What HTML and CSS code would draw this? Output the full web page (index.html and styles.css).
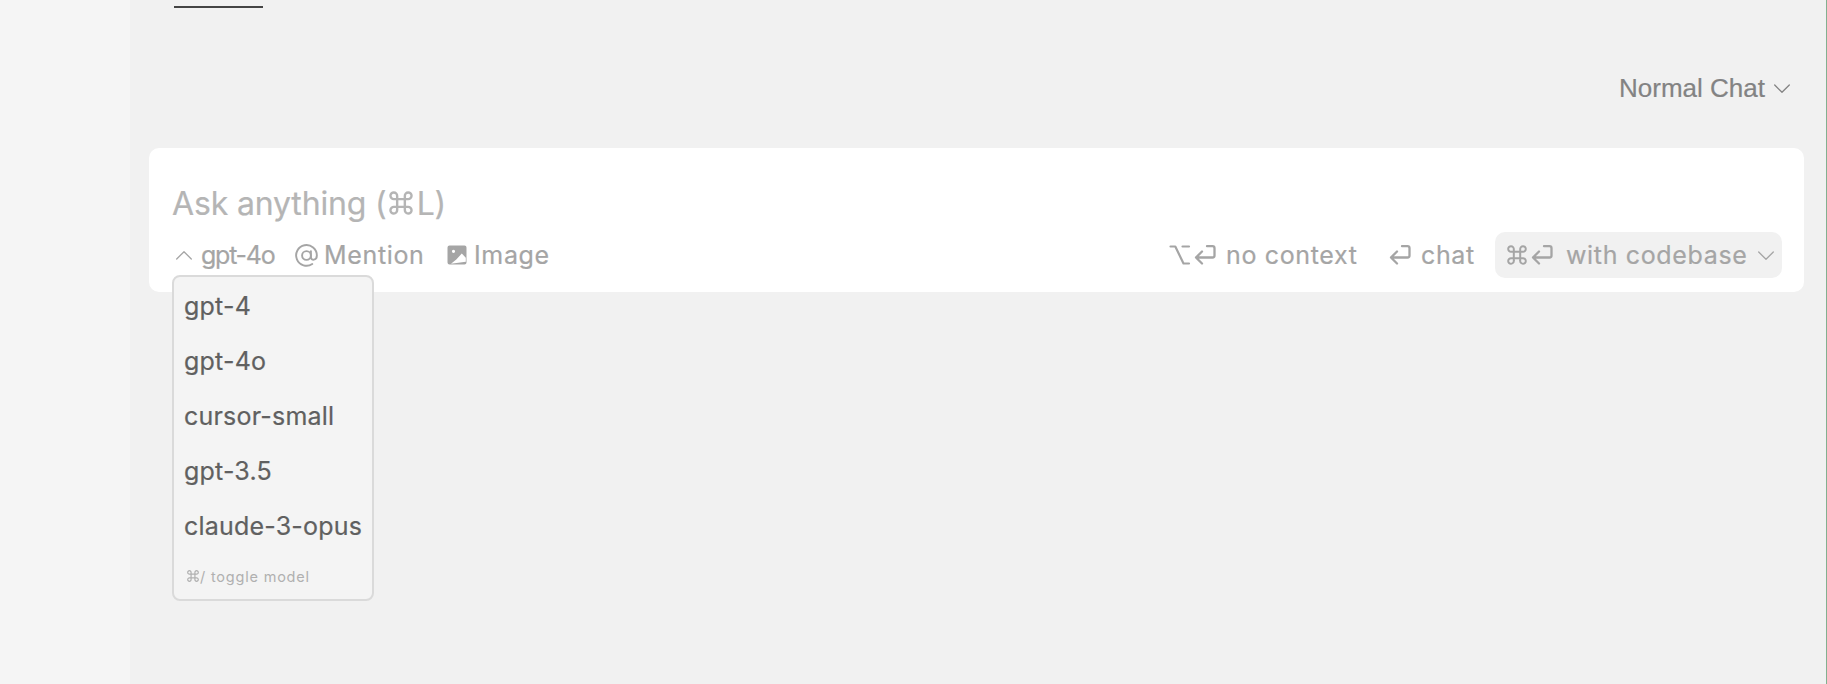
FILE: index.html
```html
<!DOCTYPE html>
<html lang="en">
<head>
    <meta charset="UTF-8" />
    <meta name="viewport" content="width=device-width, initial-scale=1.0"/>
    <title>Chat</title>
    <link rel="stylesheet" href="styles.css">
</head>
<body>

    <!-- Shared icons -->
    <svg class="icon-defs">
        <symbol id="icon-return" viewBox="0 0 22 20">
            <path d="M13 1.200h5.500a2 2 0 0 1 2 2v7.300a2 2 0 0 1-2 2H2M8 6.500L2 12.500l6 6" />
        </symbol>
        <symbol id="icon-command" viewBox="0 0 20 20">
            <path d="M6.8 6.8h6.4v6.4H6.8zM6.8 6.8H4.1a2.8 2.8 0 1 1 2.7-2.7zM13.2 6.8V4.1a2.8 2.8 0 1 1 2.7 2.7zM13.2 13.2h2.7a2.8 2.8 0 1 1-2.7 2.7zM6.8 13.2v2.7a2.8 2.8 0 1 1-2.7-2.7z" />
        </symbol>
        <symbol id="icon-chevron" viewBox="0 0 16 10">
            <path d="M0.7 1l7.3 7.3L15.3 1" />
        </symbol>
    </svg>

    <div class="app">
        <div class="sidebar"></div>

        <div class="chat-panel">
            <div class="tab-underline"></div>

            <!-- Chat mode -->
            <div class="chat-mode">
                <span class="mode-label">Normal Chat</span>
                <svg class="chevron"><use href="#icon-chevron" /></svg>
            </div>

            <!-- Input box -->
            <div class="input-box">
                <div class="placeholder">Ask anything (<svg class="command"><use href="#icon-command" /></svg>L)</div>

                <div class="toolbar">
                    <div class="model-picker">
                        <svg class="chevron chevron-up"><use href="#icon-chevron" /></svg>
                        <span class="model-name">gpt-4o</span>

                        <!-- Model dropdown -->
                        <div class="model-menu">
                            <div class="model-item">gpt-4</div>
                            <div class="model-item">gpt-4o</div>
                            <div class="model-item">cursor-small</div>
                            <div class="model-item">gpt-3.5</div>
                            <div class="model-item">claude-3-opus</div>
                            <div class="model-hint"><svg class="command"><use href="#icon-command" /></svg>/ toggle model</div>
                        </div>
                    </div>

                    <div class="mention">
                        <svg class="at-icon" viewBox="0 0 24 24">
                            <circle cx="12" cy="12" r="4.6" />
                            <path d="M16.6 7.4v6.2c0 4 6.2 3.8 6.2-1.6A10.8 10.8 0 1 0 18 20.9" />
                        </svg>
                        <span class="mention-label">Mention</span>
                    </div>

                    <div class="image">
                        <svg class="image-icon" viewBox="0 0 20 20">
                            <path fill-rule="evenodd" d="M2.500 .5h15a2 2 0 0 1 2 2v15a2 2 0 0 1-2 2h-15a2 2 0 0 1-2-2v-15a2 2 0 0 1 2-2zM6.500 4.700a1.600 1.600 0 1 0 0 3.200 1.600 1.600 0 0 0 0-3.200zM4 18.700l14.800-2v-4L14.800 8.500l-5.500 6z" />
                        </svg>
                        <span class="image-label">Image</span>
                    </div>

                    <div class="submit-options">
                        <div class="option no-context">
                            <svg class="option-key" viewBox="0 0 22 20"><path d="M1.500 1.500h4.800l8.200 17H20M13.500 1.500H20" /></svg>
                            <svg class="return"><use href="#icon-return" /></svg>
                            <span class="no-context-label">no context</span>
                        </div>
                        <div class="option chat">
                            <svg class="return"><use href="#icon-return" /></svg>
                            <span class="chat-label">chat</span>
                        </div>
                        <div class="option codebase">
                            <svg class="command"><use href="#icon-command" /></svg>
                            <svg class="return"><use href="#icon-return" /></svg>
                            <span class="codebase-label">with codebase</span>
                            <svg class="chevron"><use href="#icon-chevron" /></svg>
                        </div>
                    </div>
                </div>
            </div>
        </div>
    </div>

</body>
</html>
```
FILE: styles.css
```css
* {
    box-sizing: border-box;
}

body {
    margin: 0;
    background-color: #f1f1f1;
    font-family: 'Inter', sans-serif;
    color: #a5a5a5;
    -webkit-text-stroke: 0.2px currentColor;
    overflow: hidden;
}

svg {
    display: block;
    flex-shrink: 0;
    fill: none;
    stroke: currentColor;
    stroke-width: 2.3;
    stroke-linecap: round;
    stroke-linejoin: round;
}

.icon-defs {
    display: none;
}

.app {
    display: flex;
    height: 684px;
    border-right: 1px solid #83b090;
}

.sidebar {
    width: 130px;
    background-color: #f5f5f5;
}

.chat-panel {
    flex: 1;
    padding: 6px 22px 0 19px;
}

.tab-underline {
    width: 88.5px;
    height: 2px;
    margin-left: 25px;
    background-color: #444;
}

/* Chat mode */
.chat-mode {
    display: flex;
    justify-content: flex-end;
    align-items: center;
    height: 30px;
    margin-top: 65px;
    padding-right: 14px;
    color: #838383;
}

.mode-label {
    width: 155px;
    font-family: 'Liberation Sans', sans-serif;
    font-size: 26px;
    white-space: nowrap;
}

.chat-mode .chevron {
    margin-top: 2px;
}

.chevron {
    width: 16px;
    height: 10px;
    stroke-width: 1.3;
}

.chevron-up {
    transform: rotate(180deg);
}

/* Input box */
.input-box {
    height: 144px;
    margin-top: 45px;
    padding: 35px 22px 0 23px;
    background-color: #fff;
    border-radius: 10px;
}

.placeholder {
    display: flex;
    align-items: center;
    height: 41px;
    font-size: 32px;
    letter-spacing: -0.15px;
    white-space: pre;
    color: #b5b5b5;
}

.placeholder .command {
    width: 24px;
    height: 24px;
    margin: 0 4px 1px 2px;
}

.toolbar {
    display: flex;
    align-items: center;
    height: 46px;
    margin-top: 8px;
    font-size: 25px;
    letter-spacing: 0.65px;
    white-space: nowrap;
}

.toolbar span {
    line-height: 46px;
}

.model-picker,
.mention,
.image,
.submit-options,
.option {
    display: flex;
    align-items: center;
}

.model-picker {
    position: relative;
    width: 123px;
    height: 46px;
    padding-left: 4px;
}

.model-name {
    margin-left: 9px;
    letter-spacing: -1.25px;
}

.mention {
    width: 152px;
}

.at-icon {
    width: 23px;
    height: 23px;
    margin-right: 6px;
    stroke-width: 2;
}

.image-icon {
    width: 20px;
    height: 20px;
    margin-right: 7px;
    fill: currentColor;
    stroke: none;
}

/* Submit options */
.submit-options {
    margin-left: auto;
}

.return {
    width: 22px;
    height: 20px;
}

.command {
    width: 20px;
    height: 20px;
    stroke-width: 2;
}

.no-context {
    width: 220px;
}

.option-key {
    width: 22px;
    height: 20px;
    margin-right: 3px;
    stroke-width: 2.2;
}

.no-context-label {
    margin-left: 10px;
}

.chat {
    width: 106px;
}

.chat-label {
    margin-left: 10px;
}

.codebase {
    width: 287px;
    height: 46px;
    padding-left: 12px;
    background-color: #f1f1f1;
    border-radius: 10px;
}

.codebase .return {
    margin-left: 4px;
}

.codebase-label {
    width: 192px;
    margin-left: 13px;
}

.codebase .chevron {
    margin-top: 2px;
}

/* Model dropdown */
.model-menu {
    position: absolute;
    top: 43px;
    left: 0;
    z-index: 1;
    width: 202px;
    height: 326px;
    padding: 2px 0 0 10px;
    background-color: #f4f4f4;
    border: 2px solid #dadada;
    border-radius: 8px;
    color: #606060;
}

.model-item {
    height: 55px;
    line-height: 55px;
    letter-spacing: 0.2px;
}

.model-hint {
    display: flex;
    align-items: center;
    height: 44px;
    padding-left: 3px;
    font-size: 14.5px;
    letter-spacing: 0.8px;
    -webkit-text-stroke: 0;
    color: #b0b0b0;
}

.model-hint .command {
    width: 12px;
    height: 12px;
    margin-right: 1px;
}
```
